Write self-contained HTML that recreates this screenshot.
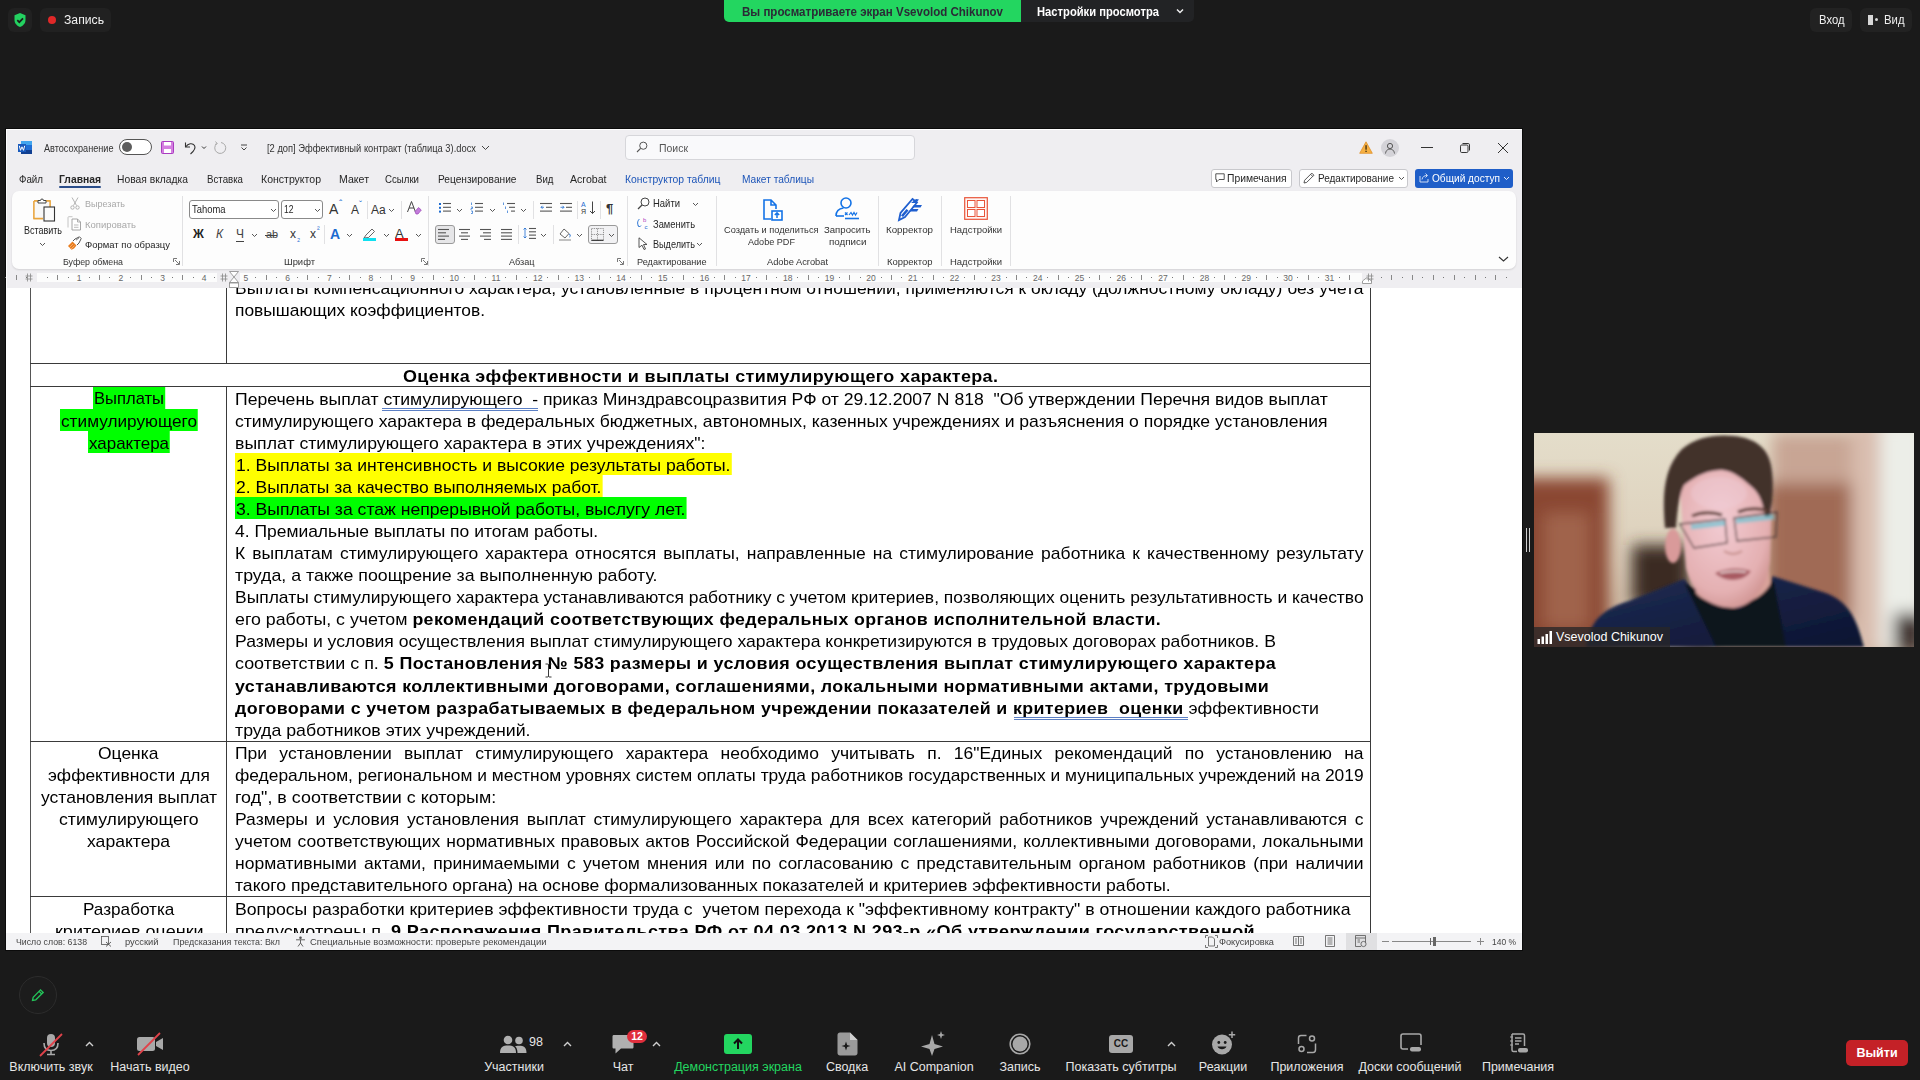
<!DOCTYPE html><html><head><meta charset="utf-8"><style>
*{box-sizing:border-box;margin:0;padding:0}
html,body{width:1920px;height:1080px;overflow:hidden;background:#1a1a1a;font-family:"Liberation Sans",sans-serif}
.a{position:absolute}
.t{position:absolute;white-space:nowrap;line-height:1}
.ln{position:absolute;white-space:nowrap;font-size:17px;line-height:22px;height:22px;color:#000;transform-origin:0 0}
.ln b{font-weight:bold;letter-spacing:0.35px}
.fit{transform-origin:0 0}
svg{position:absolute;overflow:visible}
</style></head><body><div class="a" style="left:8px;top:8px;width:24px;height:24px;background:#212121;border-radius:6px"></div><svg style="left:13px;top:12px" width="14" height="16" viewBox="0 0 14 16"><path d="M7 1 L12.5 3.2 V8 C12.5 11.5 10 13.8 7 15 C4 13.8 1.5 11.5 1.5 8 V3.2 Z" fill="#23d160"/><path d="M4.3 8.2 L6.3 10.2 L10 6.3" stroke="#1b1b1b" stroke-width="1.7" fill="none"/></svg><div class="a" style="left:40px;top:8px;width:71px;height:24px;background:#212121;border-radius:6px"></div><div class="a" style="left:48px;top:16px;width:8px;height:8px;background:#e02828;border-radius:50%"></div><div class="t fit" id="F1" style="transform:scaleX(0.9752);left:64px;top:14px;font-size:12.5px;color:#f2f2f2;">Запись</div><div class="a" style="left:724px;top:0px;width:297px;height:22px;background:#23d660;border-bottom-left-radius:5px"></div><div class="t fit" id="F2" style="transform:scaleX(0.8873);left:742px;top:5px;font-size:13px;color:#2b2a36;font-weight:bold">Вы просматриваете экран Vsevolod Chikunov</div><div class="a" style="left:1021px;top:0px;width:173px;height:22px;background:#222325;border-bottom-right-radius:5px"></div><div class="t fit" id="F3" style="transform:scaleX(0.8616);left:1037px;top:5px;font-size:13px;color:#fff;font-weight:bold">Настройки просмотра</div><svg style="left:1176px;top:8px" width="8" height="6" viewBox="0 0 8 6"><path d="M1 1.5 L4 4.5 L7 1.5" stroke="#eee" stroke-width="1.5" fill="none"/></svg><div class="a" style="left:1810px;top:8px;width:42px;height:24px;background:#222222;border-radius:6px"></div><div class="t fit" id="F4" style="transform:scaleX(0.9017);left:1819px;top:14px;font-size:12.5px;color:#f0f0f0;">Вход</div><div class="a" style="left:1860px;top:8px;width:52px;height:24px;background:#222222;border-radius:6px"></div><div class="a" style="left:1868px;top:15px;width:5px;height:10px;background:#d8d8d8"></div><div class="a" style="left:1875px;top:18px;width:3px;height:3px;background:#d8d8d8;border-radius:50%"></div><div class="t fit" id="F5" style="transform:scaleX(0.9061);left:1884px;top:14px;font-size:12.5px;color:#f0f0f0;">Вид</div><div class="a" style="left:5px;top:128px;width:1518px;height:823px;background:#0b0b0b"></div><div class="a" style="left:6px;top:129px;width:1516px;height:821px;background:#efeef1;border-top:1px solid #fff;border-left:1px solid #fff"></div><svg style="left:18px;top:141px" width="14" height="13" viewBox="0 0 14 13"><rect x="3" y="0" width="11" height="13" fill="#1f6fd6"/><rect x="3" y="0" width="11" height="4" fill="#41a5ee"/><rect x="3" y="9" width="11" height="4" fill="#103f91"/><rect x="0" y="3" width="8" height="8" fill="#185abd"/><path d="M1.3 4.8 L2.5 9.3 L4 5.8 L5.5 9.3 L6.7 4.8" stroke="#fff" stroke-width="1" fill="none"/></svg><div class="t fit" id="F6" style="transform:scaleX(0.8682);left:44px;top:143px;font-size:10.5px;color:#333;">Автосохранение</div><div class="a" style="left:119px;top:139px;width:33px;height:16px;border:1.3px solid #555;border-radius:8px;background:#fff"></div><div class="a" style="left:122px;top:142px;width:10px;height:10px;background:#5d5d5d;border-radius:50%"></div><svg style="left:161px;top:141px" width="13" height="13" viewBox="0 0 13 13"><rect x="0.5" y="0.5" width="12" height="12" rx="1" fill="#d47ee0" stroke="#a93cc0" stroke-width="1"/><rect x="3" y="1" width="7" height="3.5" fill="#fff"/><rect x="3" y="8" width="7" height="4" fill="#fff"/></svg><svg style="left:184px;top:141px" width="24" height="14" viewBox="0 0 24 14"><path d="M1.5 1.5 V6 H6" stroke="#333" stroke-width="1.1" fill="none"/><path d="M1.8 5.8 C4 2.5 8.5 1.5 10.5 4.5 C12 7 10 10 6.5 13" stroke="#333" stroke-width="1.1" fill="none"/><path d="M18 5.5 L20 7.5 L22 5.5" stroke="#333" stroke-width="1" fill="none"/></svg><svg style="left:214px;top:141px" width="14" height="14" viewBox="0 0 14 14"><path d="M3 2.5 A5.5 5.5 0 1 0 7 1.5" stroke="#aaa" stroke-width="1" fill="none"/><path d="M1.5 0.5 L3.2 2.6 L1 3.5" stroke="#aaa" stroke-width="1" fill="none"/></svg><svg style="left:240px;top:144px" width="8" height="8" viewBox="0 0 8 8"><path d="M1 1 H7" stroke="#444" stroke-width="1"/><path d="M1.5 3.5 L4 6 L6.5 3.5" stroke="#444" stroke-width="1" fill="none"/></svg><div class="t fit" id="F7" style="transform:scaleX(0.8895);left:267px;top:143px;font-size:10.5px;color:#333;">[2 доп] Эффективный контракт (таблица 3).docx</div><svg style="left:481px;top:145px" width="9" height="6" viewBox="0 0 9 6"><path d="M1 1 L4.5 4.5 L8 1" stroke="#444" stroke-width="1" fill="none"/></svg><div class="a" style="left:625px;top:135px;width:290px;height:25px;background:#f9f9fb;border:1px solid #d6d6da;border-radius:4px"></div><svg style="left:636px;top:141px" width="12" height="12" viewBox="0 0 12 12"><circle cx="7.3" cy="4.7" r="3.6" stroke="#555" stroke-width="1" fill="none"/><path d="M4.6 7.4 L1 11" stroke="#555" stroke-width="1.1"/></svg><div class="t fit" id="F8" style="transform:scaleX(0.9513);left:659px;top:143px;font-size:11px;color:#555;">Поиск</div><svg style="left:1359px;top:141px" width="14" height="13" viewBox="0 0 14 13"><path d="M7 0.8 L13.3 12.3 H0.7 Z" fill="#f6b042" stroke="#e0902a" stroke-width="0.8"/><rect x="6.4" y="4.2" width="1.3" height="4.5" fill="#3a2a10"/><rect x="6.4" y="9.7" width="1.3" height="1.3" fill="#3a2a10"/></svg><div class="a" style="left:1381px;top:139px;width:18px;height:18px;background:#d4d3d8;border-radius:50%"></div><svg style="left:1384px;top:142px" width="12" height="12" viewBox="0 0 12 12"><circle cx="6" cy="4" r="2.6" stroke="#555" stroke-width="1" fill="none"/><path d="M1.5 11.5 C2 8 4 7.2 6 7.2 C8 7.2 10 8 10.5 11.5" stroke="#555" stroke-width="1" fill="none"/></svg><div class="a" style="left:1421px;top:147px;width:12px;height:1px;background:#333"></div><svg style="left:1459px;top:142px" width="12" height="12" viewBox="0 0 12 12"><rect x="1.5" y="3" width="7.5" height="7.5" rx="1.2" stroke="#333" stroke-width="1" fill="none"/><path d="M3.5 1.5 H9.2 C10 1.5 10.5 2 10.5 2.8 V8.5" stroke="#333" stroke-width="1" fill="none"/></svg><svg style="left:1497px;top:142px" width="12" height="12" viewBox="0 0 12 12"><path d="M1 1 L11 11 M11 1 L1 11" stroke="#333" stroke-width="1"/></svg><div class="t fit" id="F9" style="transform:scaleX(0.8873);left:18.5px;top:174px;font-size:11px;color:#262626;">Файл</div><div class="t fit" id="F10" style="transform:scaleX(0.9385);left:59px;top:174px;font-size:11px;color:#262626;font-weight:bold;">Главная</div><div class="t fit" id="F11" style="transform:scaleX(0.9363);left:117px;top:174px;font-size:11px;color:#262626;">Новая вкладка</div><div class="t fit" id="F12" style="transform:scaleX(0.8804);left:207px;top:174px;font-size:11px;color:#262626;">Вставка</div><div class="t fit" id="F13" style="transform:scaleX(0.9567);left:261px;top:174px;font-size:11px;color:#262626;">Конструктор</div><div class="t fit" id="F14" style="transform:scaleX(0.9634);left:338.5px;top:174px;font-size:11px;color:#262626;">Макет</div><div class="t fit" id="F15" style="transform:scaleX(0.8778);left:385px;top:174px;font-size:11px;color:#262626;">Ссылки</div><div class="t fit" id="F16" style="transform:scaleX(0.9240);left:438px;top:174px;font-size:11px;color:#262626;">Рецензирование</div><div class="t fit" id="F17" style="transform:scaleX(0.8791);left:535.5px;top:174px;font-size:11px;color:#262626;">Вид</div><div class="t fit" id="F18" style="transform:scaleX(0.9625);left:570px;top:174px;font-size:11px;color:#262626;">Acrobat</div><div class="t fit" id="F19" style="transform:scaleX(0.9410);left:625px;top:174px;font-size:11px;color:#1d55b8;">Конструктор таблиц</div><div class="t fit" id="F20" style="transform:scaleX(0.9255);left:742px;top:174px;font-size:11px;color:#1d55b8;">Макет таблицы</div><div class="a" style="left:59px;top:186.3px;width:42px;height:2px;background:#2a4d8a;border-radius:1px"></div><div class="a" style="left:1211px;top:169px;width:81px;height:19px;background:#fff;border:1px solid #c8c8cc;border-radius:3px"></div><svg style="left:1215px;top:173px" width="10" height="10" viewBox="0 0 10 10"><path d="M0.8 0.8 H9.2 V6.5 H4 L1.5 9 V6.5 H0.8 Z" stroke="#444" stroke-width="0.9" fill="none"/></svg><div class="t fit" id="F21" style="transform:scaleX(0.9814);left:1227px;top:173px;font-size:10.5px;color:#262626;">Примечания</div><div class="a" style="left:1299px;top:169px;width:109px;height:19px;background:#fff;border:1px solid #c8c8cc;border-radius:3px"></div><svg style="left:1303px;top:172px" width="12" height="12" viewBox="0 0 12 12"><path d="M1 11 L1.6 8.3 L8.8 1.1 L10.9 3.2 L3.7 10.4 Z M7.6 2.3 L9.7 4.4" stroke="#444" stroke-width="0.9" fill="none"/></svg><div class="t fit" id="F22" style="transform:scaleX(0.9500);left:1318px;top:173px;font-size:10.5px;color:#262626;">Редактирование</div><svg style="left:1398px;top:176px" width="7" height="5" viewBox="0 0 7 5"><path d="M1 1 L3.5 3.5 L6 1" stroke="#444" stroke-width="0.9" fill="none"/></svg><div class="a" style="left:1415px;top:169px;width:98px;height:19px;background:#1f5ec8;border-radius:3px"></div><svg style="left:1419px;top:172px" width="11" height="11" viewBox="0 0 11 11"><path d="M1 4 V10 H9 V7" stroke="#dfe8f8" stroke-width="0.9" fill="none"/><path d="M3 7.5 C3.5 4.5 5.5 3.5 8 3.5 M6.5 1.5 L8.5 3.5 L6.5 5.5" stroke="#dfe8f8" stroke-width="0.9" fill="none"/></svg><div class="t fit" id="F23" style="transform:scaleX(0.9639);left:1432px;top:173px;font-size:10.5px;color:#fff;">Общий доступ</div><svg style="left:1503px;top:176px" width="7" height="5" viewBox="0 0 7 5"><path d="M1 1 L3.5 3.5 L6 1" stroke="#fff" stroke-width="0.9" fill="none"/></svg><div class="a" style="left:12px;top:191px;width:1504px;height:78px;background:#fdfdfd;border-radius:7px;box-shadow:0 1px 2px rgba(0,0,0,0.12)"></div><svg style="left:33px;top:197px" width="23" height="25" viewBox="0 0 23 25"><path d="M1 4 H5 M13 4 H17 V10" stroke="#e8a33a" stroke-width="1.3" fill="none"/><path d="M1 4 V21.5 H10" stroke="#e8a33a" stroke-width="1.3" fill="#f7f7f7"/><rect x="1" y="4" width="16" height="17.5" fill="#f8f8f8" stroke="none"/><path d="M1 4 V21.5 H10 M1 4 H5 M13 4 H17 V10" stroke="#e8a33a" stroke-width="1.3" fill="none"/><path d="M5 6 V3.5 H7.5 A1.5 1.5 0 0 1 10.5 3.5 H13 V6 Z" stroke="#444" stroke-width="1" fill="#fff"/><rect x="11" y="10" width="10.5" height="14" stroke="#333" stroke-width="1.1" fill="#fbfbfb"/></svg><div class="t fit" id="F24" style="transform:scaleX(0.8536);left:24px;top:225px;font-size:10.5px;color:#222;">Вставить</div><svg style="left:39px;top:242px" width="7" height="5" viewBox="0 0 7 5"><path d="M1 1 L3.5 3.5 L6 1" stroke="#444" stroke-width="0.9" fill="none"/></svg><svg style="left:70px;top:197px" width="10" height="13" viewBox="0 0 10 13"><path d="M2 0.5 L6.5 8.5 M8 0.5 L3.5 8.5" stroke="#aaa" stroke-width="0.9"/><circle cx="2.5" cy="10.5" r="1.7" stroke="#aaa" stroke-width="0.9" fill="none"/><circle cx="7.5" cy="10.5" r="1.7" stroke="#aaa" stroke-width="0.9" fill="none"/></svg><div class="t fit" id="F25" style="transform:scaleX(0.9464);left:85px;top:199px;font-size:9.5px;color:#a8a8a8;">Вырезать</div><svg style="left:67px;top:216px" width="15" height="15" viewBox="0 0 15 15"><path d="M1 11.5 V1.5 C1 1 1.3 0.7 1.8 0.7 H5.5" stroke="#c4c4c4" stroke-width="1" fill="none"/><path d="M5 3 H10.5 L13.5 6 V14 H5 Z" stroke="#9c9c9c" stroke-width="0.9" fill="#fff"/><path d="M10.5 3 V6 H13.5" stroke="#9c9c9c" stroke-width="0.8" fill="none"/><path d="M7 9 H11.5 M7 11.3 H11.5" stroke="#aaa" stroke-width="0.8"/></svg><div class="t fit" id="F26" style="transform:scaleX(0.9969);left:85px;top:219.5px;font-size:9.5px;color:#a8a8a8;">Копировать</div><svg style="left:67px;top:236px" width="15" height="15" viewBox="0 0 15 15"><path d="M1 10 L5.5 5.5 L9.5 9.5 L7 12.5 L4.5 13.8 Z" fill="#ea7d1d"/><path d="M2.5 11.5 L6 8 M4 13 L7.5 9.5" stroke="#fff" stroke-width="0.5" opacity="0.7"/><path d="M6 5 L8 3 L12.5 0.8 L14.2 2.5 L12 7 L10 9" stroke="#555" stroke-width="1" fill="#fff"/><path d="M9 4.2 L12 1.8" stroke="#555" stroke-width="0.8"/></svg><div class="t fit" id="F27" style="transform:scaleX(0.9978);left:85px;top:240px;font-size:9.5px;color:#262626;">Формат по образцу</div><div class="t fit" id="F28" style="transform:scaleX(0.9293);left:63px;top:256.5px;font-size:9.5px;color:#333;">Буфер обмена</div><svg style="left:173px;top:258px" width="7" height="7" viewBox="0 0 7 7"><path d="M0.5 4 V0.5 H4 M6.5 3 V6.5 H3 M2 2 L6 6" stroke="#555" stroke-width="0.8" fill="none"/></svg><div class="a" style="left:182px;top:196px;width:1px;height:70px;background:#e1e1e3"></div><div class="a" style="left:189px;top:200px;width:90px;height:19px;background:#fff;border:1px solid #8a8a8a;border-radius:3px"></div><div class="t fit" id="F29" style="transform:scaleX(0.8967);left:192px;top:204px;font-size:10.5px;color:#262626;">Tahoma</div><svg style="left:270px;top:208px" width="7" height="5" viewBox="0 0 7 5"><path d="M1 1 L3.5 3.5 L6 1" stroke="#444" stroke-width="0.9" fill="none"/></svg><div class="a" style="left:281px;top:200px;width:42px;height:19px;background:#fff;border:1px solid #8a8a8a;border-radius:3px"></div><div class="t fit" id="F30" style="transform:scaleX(0.8128);left:284px;top:204px;font-size:10.5px;color:#262626;">12</div><svg style="left:314px;top:208px" width="7" height="5" viewBox="0 0 7 5"><path d="M1 1 L3.5 3.5 L6 1" stroke="#444" stroke-width="0.9" fill="none"/></svg><div class="t" style="left:329px;top:202px;font-size:14px;color:#333;">A</div><div class="t" style="left:339px;top:200px;font-size:10px;color:#1d6bd0;">ˆ</div><div class="t" style="left:351px;top:204px;font-size:12px;color:#333;">A</div><div class="t" style="left:359px;top:200px;font-size:9px;color:#1d6bd0;">ˇ</div><div class="a" style="left:367px;top:201px;width:1px;height:18px;background:#e1e1e3"></div><div class="t" style="left:371px;top:204px;font-size:12px;color:#333;">Aa</div><svg style="left:388px;top:208px" width="7" height="5" viewBox="0 0 7 5"><path d="M1 1 L3.5 3.5 L6 1" stroke="#444" stroke-width="0.9" fill="none"/></svg><div class="a" style="left:401px;top:201px;width:1px;height:18px;background:#e1e1e3"></div><svg style="left:407px;top:201px" width="15" height="15" viewBox="0 0 15 15"><path d="M0.5 11 L4.5 0.5 L8.5 11 M2 7 H7" stroke="#444" stroke-width="1" fill="none"/><path d="M8 10.5 L11.5 6.5 L14.3 9 L11 13 H9 Z" fill="#c37ddb" stroke="#9b44b8" stroke-width="0.7"/></svg><div class="t" style="left:193px;top:228px;font-size:12px;color:#222;font-weight:bold">Ж</div><div class="t" style="left:216px;top:228px;font-size:12px;color:#444;font-style:italic">К</div><div class="t" style="left:236px;top:228px;font-size:12px;color:#444;">Ч</div><div class="a" style="left:236px;top:241px;width:8px;height:1px;background:#444"></div><svg style="left:251px;top:233px" width="7" height="5" viewBox="0 0 7 5"><path d="M1 1 L3.5 3.5 L6 1" stroke="#444" stroke-width="0.9" fill="none"/></svg><div class="t" style="left:266px;top:229px;font-size:11px;color:#444;">ab</div><div class="a" style="left:265px;top:235px;width:12px;height:1px;background:#444"></div><div class="t" style="left:290px;top:228px;font-size:12px;color:#333;">x</div><div class="t" style="left:297px;top:235px;font-size:8px;color:#1d6bd0;">₂</div><div class="t" style="left:310px;top:228px;font-size:12px;color:#333;">x</div><div class="t" style="left:317px;top:226px;font-size:8px;color:#1d6bd0;">²</div><div class="a" style="left:324px;top:225px;width:1px;height:19px;background:#e1e1e3"></div><div class="t" style="left:330px;top:227px;font-size:14px;color:#1d6bd0;font-weight:bold">A</div><svg style="left:346px;top:233px" width="7" height="5" viewBox="0 0 7 5"><path d="M1 1 L3.5 3.5 L6 1" stroke="#444" stroke-width="0.9" fill="none"/></svg><svg style="left:363px;top:228px" width="13" height="14" viewBox="0 0 13 14"><path d="M1 10 L3 7 L9 1 L11.5 3.5 L5.5 9.5 Z" stroke="#555" stroke-width="0.9" fill="none"/></svg><div class="a" style="left:363px;top:238px;width:13px;height:3px;background:#10e0f0"></div><svg style="left:383px;top:233px" width="7" height="5" viewBox="0 0 7 5"><path d="M1 1 L3.5 3.5 L6 1" stroke="#444" stroke-width="0.9" fill="none"/></svg><div class="t" style="left:395px;top:227px;font-size:13px;color:#333;">A</div><div class="a" style="left:395px;top:238px;width:13px;height:3px;background:#e81010"></div><svg style="left:415px;top:233px" width="7" height="5" viewBox="0 0 7 5"><path d="M1 1 L3.5 3.5 L6 1" stroke="#444" stroke-width="0.9" fill="none"/></svg><div class="t fit" id="F31" style="transform:scaleX(0.9915);left:284px;top:256.5px;font-size:9.5px;color:#333;">Шрифт</div><svg style="left:421px;top:258px" width="7" height="7" viewBox="0 0 7 7"><path d="M0.5 4 V0.5 H4 M6.5 3 V6.5 H3 M2 2 L6 6" stroke="#555" stroke-width="0.8" fill="none"/></svg><div class="a" style="left:428px;top:196px;width:1px;height:70px;background:#e1e1e3"></div><svg style="left:438px;top:202px" width="16" height="14" viewBox="0 0 16 14"><path d="M5 1.5 H13" stroke="#555" stroke-width="1.1"/><path d="M5 5.3 H13" stroke="#555" stroke-width="1.1"/><path d="M5 9.1 H13" stroke="#555" stroke-width="1.1"/><rect x="1" y="1" width="2" height="2" fill="#1d6bd0"/><rect x="1" y="4.8" width="2" height="2" fill="#1d6bd0"/><rect x="1" y="8.6" width="2" height="2" fill="#1d6bd0"/></svg><svg style="left:456px;top:208px" width="7" height="5" viewBox="0 0 7 5"><path d="M1 1 L3.5 3.5 L6 1" stroke="#444" stroke-width="0.9" fill="none"/></svg><svg style="left:470px;top:202px" width="16" height="14" viewBox="0 0 16 14"><path d="M5 1.5 H13" stroke="#555" stroke-width="1.1"/><path d="M5 5.3 H13" stroke="#555" stroke-width="1.1"/><path d="M5 9.1 H13" stroke="#555" stroke-width="1.1"/><path d="M1.5 0.5 V3 M1 5 H2.5 V6.5 H1 V8 M1 9 H2.5 V11.5 H1" stroke="#1d6bd0" stroke-width="0.7" fill="none"/></svg><svg style="left:489px;top:208px" width="7" height="5" viewBox="0 0 7 5"><path d="M1 1 L3.5 3.5 L6 1" stroke="#444" stroke-width="0.9" fill="none"/></svg><svg style="left:502px;top:202px" width="16" height="14" viewBox="0 0 16 14"><path d="M5 1.5 H13" stroke="#555" stroke-width="1.1"/><path d="M7 5.3 H13" stroke="#555" stroke-width="1.1"/><path d="M9 9.1 H13" stroke="#555" stroke-width="1.1"/><path d="M1.5 0.5 V3 M3.5 4.5 V7 M5.5 8.5 V11" stroke="#1d6bd0" stroke-width="0.7"/></svg><svg style="left:520px;top:208px" width="7" height="5" viewBox="0 0 7 5"><path d="M1 1 L3.5 3.5 L6 1" stroke="#444" stroke-width="0.9" fill="none"/></svg><div class="a" style="left:533px;top:201px;width:1px;height:18px;background:#e1e1e3"></div><svg style="left:540px;top:202px" width="16" height="14" viewBox="0 0 16 14"><path d="M0 1.5 H12" stroke="#555" stroke-width="1.1"/><path d="M6 5.3 H12" stroke="#555" stroke-width="1.1"/><path d="M0 9.1 H12" stroke="#555" stroke-width="1.1"/><path d="M4 5.3 H1 M2.5 3.8 L1 5.3 L2.5 6.8" stroke="#1d6bd0" stroke-width="0.8" fill="none"/></svg><svg style="left:560px;top:202px" width="16" height="14" viewBox="0 0 16 14"><path d="M0 1.5 H12" stroke="#555" stroke-width="1.1"/><path d="M6 5.3 H12" stroke="#555" stroke-width="1.1"/><path d="M0 9.1 H12" stroke="#555" stroke-width="1.1"/><path d="M0.5 5.3 H4 M2.5 3.8 L4 5.3 L2.5 6.8" stroke="#1d6bd0" stroke-width="0.8" fill="none"/></svg><div class="a" style="left:577px;top:201px;width:1px;height:18px;background:#e1e1e3"></div><div class="t" style="left:581px;top:201px;font-size:7px;color:#1d6bd0;">А</div><div class="t" style="left:581px;top:208px;font-size:7px;color:#333;">Я</div><svg style="left:589px;top:201px" width="7" height="14" viewBox="0 0 7 14"><path d="M3.5 0.5 V12.5 M1 10 L3.5 12.5 L6 10" stroke="#444" stroke-width="1" fill="none"/></svg><div class="a" style="left:600px;top:201px;width:1px;height:18px;background:#e1e1e3"></div><div class="t" style="left:606px;top:202px;font-size:13px;color:#333;font-weight:bold">¶</div><div class="a" style="left:435px;top:225px;width:20px;height:19px;background:#e6e6e8;border:1px solid #9a9a9a;border-radius:3px"></div><svg style="left:438px;top:228px" width="16" height="14" viewBox="0 0 16 14"><path d="M0 1.5 H11" stroke="#555" stroke-width="1.1"/><path d="M0 4.8 H8" stroke="#555" stroke-width="1.1"/><path d="M0 8.1 H11" stroke="#555" stroke-width="1.1"/><path d="M0 11.4 H7" stroke="#555" stroke-width="1.1"/></svg><svg style="left:459px;top:228px" width="16" height="14" viewBox="0 0 16 14"><path d="M0 1.5 H11" stroke="#555" stroke-width="1.1"/><path d="M2 4.8 H9" stroke="#555" stroke-width="1.1"/><path d="M0 8.1 H11" stroke="#555" stroke-width="1.1"/><path d="M2 11.4 H9" stroke="#555" stroke-width="1.1"/></svg><svg style="left:480px;top:228px" width="16" height="14" viewBox="0 0 16 14"><path d="M0 1.5 H11" stroke="#555" stroke-width="1.1"/><path d="M3 4.8 H11" stroke="#555" stroke-width="1.1"/><path d="M0 8.1 H11" stroke="#555" stroke-width="1.1"/><path d="M4 11.4 H11" stroke="#555" stroke-width="1.1"/></svg><svg style="left:501px;top:228px" width="16" height="14" viewBox="0 0 16 14"><path d="M0 1.5 H11" stroke="#555" stroke-width="1.1"/><path d="M0 4.8 H11" stroke="#555" stroke-width="1.1"/><path d="M0 8.1 H11" stroke="#555" stroke-width="1.1"/><path d="M0 11.4 H11" stroke="#555" stroke-width="1.1"/></svg><div class="a" style="left:518px;top:225px;width:1px;height:19px;background:#e1e1e3"></div><svg style="left:523px;top:227px" width="16" height="14" viewBox="0 0 16 14"><path d="M6 1.5 H13" stroke="#555" stroke-width="1.1"/><path d="M6 4.8 H13" stroke="#555" stroke-width="1.1"/><path d="M6 8.1 H13" stroke="#555" stroke-width="1.1"/><path d="M6 11.4 H13" stroke="#555" stroke-width="1.1"/><path d="M2 1 V11 M0.5 2.5 L2 1 L3.5 2.5 M0.5 9.5 L2 11 L3.5 9.5" stroke="#1d6bd0" stroke-width="0.8" fill="none"/></svg><svg style="left:540px;top:233px" width="7" height="5" viewBox="0 0 7 5"><path d="M1 1 L3.5 3.5 L6 1" stroke="#444" stroke-width="0.9" fill="none"/></svg><div class="a" style="left:553px;top:225px;width:1px;height:19px;background:#e1e1e3"></div><svg style="left:558px;top:227px" width="14" height="15" viewBox="0 0 14 15"><path d="M2 7 L6 2 L11 6.5 L7 11 Z" stroke="#555" stroke-width="0.9" fill="none"/><path d="M11.5 7 C12.5 8.5 12.5 9.5 11.5 10" stroke="#1d6bd0" stroke-width="1" fill="none"/><path d="M1 13 H13" stroke="#999" stroke-width="1.2"/></svg><svg style="left:576px;top:233px" width="7" height="5" viewBox="0 0 7 5"><path d="M1 1 L3.5 3.5 L6 1" stroke="#444" stroke-width="0.9" fill="none"/></svg><div class="a" style="left:588px;top:225px;width:30px;height:19px;background:#f2f2f4;border:1px solid #9a9a9a;border-radius:3px"></div><svg style="left:591px;top:228px" width="13" height="13" viewBox="0 0 13 13"><path d="M0.5 0.5 H12.5 V12.5 H0.5 Z M6.5 0.5 V12.5 M0.5 6.5 H12.5" stroke="#777" stroke-width="0.8" stroke-dasharray="1.2 1" fill="none"/><path d="M0.5 12.3 H12.5" stroke="#333" stroke-width="1.2"/></svg><svg style="left:608px;top:233px" width="7" height="5" viewBox="0 0 7 5"><path d="M1 1 L3.5 3.5 L6 1" stroke="#444" stroke-width="0.9" fill="none"/></svg><div class="t fit" id="F32" style="transform:scaleX(0.9566);left:509px;top:256.5px;font-size:9.5px;color:#333;">Абзац</div><svg style="left:617px;top:258px" width="7" height="7" viewBox="0 0 7 7"><path d="M0.5 4 V0.5 H4 M6.5 3 V6.5 H3 M2 2 L6 6" stroke="#555" stroke-width="0.8" fill="none"/></svg><div class="a" style="left:627px;top:196px;width:1px;height:70px;background:#e1e1e3"></div><svg style="left:637px;top:197px" width="13" height="13" viewBox="0 0 13 13"><circle cx="8" cy="5" r="4" stroke="#444" stroke-width="1" fill="none"/><path d="M5 8 L1 12" stroke="#444" stroke-width="1.2"/></svg><div class="t fit" id="F33" style="transform:scaleX(0.9009);left:653px;top:198px;font-size:10.5px;color:#262626;">Найти</div><svg style="left:692px;top:202px" width="7" height="5" viewBox="0 0 7 5"><path d="M1 1 L3.5 3.5 L6 1" stroke="#444" stroke-width="0.9" fill="none"/></svg><svg style="left:636px;top:216px" width="13" height="14" viewBox="0 0 13 14"><path d="M3.5 3 C1 5 1 9 3.5 11 M2 9.5 L3.5 11 L5 9.5" stroke="#1d6bd0" stroke-width="0.9" fill="none"/><text x="7" y="6" font-size="6" fill="#b040c0" font-family="Liberation Sans">b</text><text x="8.5" y="13" font-size="6" fill="#1d6bd0" font-family="Liberation Sans">c</text></svg><div class="t fit" id="F34" style="transform:scaleX(0.8901);left:653px;top:219px;font-size:10.5px;color:#262626;">Заменить</div><svg style="left:638px;top:237px" width="10" height="13" viewBox="0 0 10 13"><path d="M1 0.8 L9 7.5 H5.5 L7.5 12 L6 12.5 L4 8.2 L1 10.5 Z" stroke="#444" stroke-width="0.9" fill="#fff"/></svg><div class="t fit" id="F35" style="transform:scaleX(0.8668);left:653px;top:239px;font-size:10.5px;color:#262626;">Выделить</div><svg style="left:696px;top:242px" width="7" height="5" viewBox="0 0 7 5"><path d="M1 1 L3.5 3.5 L6 1" stroke="#444" stroke-width="0.9" fill="none"/></svg><div class="t fit" id="F36" style="transform:scaleX(0.9603);left:637px;top:256.5px;font-size:9.5px;color:#333;">Редактирование</div><div class="a" style="left:716px;top:196px;width:1px;height:70px;background:#e1e1e3"></div><svg style="left:763px;top:199px" width="20" height="22" viewBox="0 0 20 22"><path d="M8 20 H1 V1 H8 L13 6 V10 M8 1 V6 H13" stroke="#1473e6" stroke-width="1.6" fill="none"/><rect x="9" y="12" width="10" height="9" stroke="#1473e6" stroke-width="1.6" fill="#fff"/><path d="M14 19 V14 M11.8 16 L14 13.8 L16.2 16" stroke="#1473e6" stroke-width="1.5" fill="none"/></svg><div class="t fit" id="F37" style="transform:scaleX(0.9695);left:724px;top:224.5px;font-size:9.5px;color:#333;">Создать и поделиться</div><div class="t fit" id="F38" style="transform:scaleX(0.9567);left:748px;top:237px;font-size:9.5px;color:#333;">Adobe PDF</div><svg style="left:834px;top:197px" width="27" height="24" viewBox="0 0 27 24"><circle cx="12" cy="6" r="5" stroke="#1473e6" stroke-width="1.6" fill="none"/><path d="M2 19 C2 13 6 11.5 9.5 11" stroke="#1473e6" stroke-width="1.6" fill="none"/><path d="M2 19 H10" stroke="#1473e6" stroke-width="1.6"/><path d="M11 15.5 L13.5 18 M13.5 15.5 L11 18 M15 18 L17 15.5 L18.5 18 L20 15.5 L21.5 18 L23 15.5" stroke="#1473e6" stroke-width="1.2" fill="none"/><path d="M11 21.5 H25" stroke="#1473e6" stroke-width="1.6"/></svg><div class="t fit" id="F39" style="transform:scaleX(1.0088);left:824px;top:224.5px;font-size:9.5px;color:#333;">Запросить</div><div class="t fit" id="F40" style="transform:scaleX(1.0336);left:829px;top:237px;font-size:9.5px;color:#333;">подписи</div><div class="t fit" id="F41" style="transform:scaleX(0.9787);left:767px;top:256.5px;font-size:9.5px;color:#333;">Adobe Acrobat</div><div class="a" style="left:878px;top:196px;width:1px;height:70px;background:#e1e1e3"></div><svg style="left:897px;top:196px" width="26" height="26" viewBox="0 0 26 26"><path d="M2 24 L3.5 17 L15.5 3 L20 6.5 L8 21 Z" stroke="#1f5fcf" stroke-width="1.8" fill="#fff"/><path d="M14 7 L19 3 L22 3.5 L19 7 Z M17 9 H25 L23.5 11.5 H15 Z M14.5 13 H21.5 L20 15.5 H12.5 Z" fill="#1f5fcf"/><path d="M4 19.5 L9.5 13 L11.5 14.5 L6 21" fill="#1f5fcf"/></svg><div class="t fit" id="F42" style="transform:scaleX(1.0273);left:886px;top:224.5px;font-size:9.5px;color:#333;">Корректор</div><div class="t fit" id="F43" style="transform:scaleX(0.9945);left:887px;top:256.5px;font-size:9.5px;color:#333;">Корректор</div><div class="a" style="left:941px;top:196px;width:1px;height:70px;background:#e1e1e3"></div><svg style="left:964px;top:197px" width="24" height="23" viewBox="0 0 24 23"><rect x="0.7" y="0.7" width="22.6" height="21.6" stroke="#e8553a" stroke-width="1.2" fill="#fff6f4"/><rect x="3.5" y="3.5" width="7.5" height="7" stroke="#e8553a" stroke-width="1" fill="#fff"/><rect x="13" y="3.5" width="7.5" height="7" stroke="#e8553a" stroke-width="1" fill="#fff"/><rect x="3.5" y="12.5" width="7.5" height="7" stroke="#e8553a" stroke-width="1" fill="#fff"/><rect x="13" y="12.5" width="7.5" height="7" stroke="#e8553a" stroke-width="1" fill="#fff"/></svg><div class="t fit" id="F44" style="transform:scaleX(0.9976);left:950px;top:224.5px;font-size:9.5px;color:#333;">Надстройки</div><div class="t fit" id="F45" style="transform:scaleX(0.9976);left:950px;top:256.5px;font-size:9.5px;color:#333;">Надстройки</div><div class="a" style="left:1010px;top:196px;width:1px;height:70px;background:#e1e1e3"></div><svg style="left:1498px;top:256px" width="11" height="6" viewBox="0 0 11 6"><path d="M1 1 L5.5 5 L10 1" stroke="#333" stroke-width="1.1" fill="none"/></svg><div class="a" style="left:37px;top:273px;width:180px;height:9px;background:#fcfcfc"></div><div class="a" style="left:240px;top:273px;width:1122px;height:9px;background:#fcfcfc"></div><div class="a" style="left:5.2px;top:277px;width:1px;height:1px;background:#777"></div><div class="a" style="left:15.7px;top:275px;width:1px;height:5px;background:#888"></div><div class="a" style="left:26.1px;top:277px;width:1px;height:1px;background:#777"></div><div class="a" style="left:46.9px;top:277px;width:1px;height:1px;background:#777"></div><div class="a" style="left:57.3px;top:275px;width:1px;height:5px;background:#888"></div><div class="a" style="left:67.8px;top:277px;width:1px;height:1px;background:#777"></div><div class="t" style="left:73.2px;top:274px;width:12px;text-align:center;font-size:8.5px;color:#666">1</div><div class="a" style="left:88.6px;top:277px;width:1px;height:1px;background:#777"></div><div class="a" style="left:99.0px;top:275px;width:1px;height:5px;background:#888"></div><div class="a" style="left:109.4px;top:277px;width:1px;height:1px;background:#777"></div><div class="t" style="left:114.9px;top:274px;width:12px;text-align:center;font-size:8.5px;color:#666">2</div><div class="a" style="left:130.3px;top:277px;width:1px;height:1px;background:#777"></div><div class="a" style="left:140.7px;top:275px;width:1px;height:5px;background:#888"></div><div class="a" style="left:151.1px;top:277px;width:1px;height:1px;background:#777"></div><div class="t" style="left:156.5px;top:274px;width:12px;text-align:center;font-size:8.5px;color:#666">3</div><div class="a" style="left:172.0px;top:277px;width:1px;height:1px;background:#777"></div><div class="a" style="left:182.4px;top:275px;width:1px;height:5px;background:#888"></div><div class="a" style="left:192.8px;top:277px;width:1px;height:1px;background:#777"></div><div class="t" style="left:198.2px;top:274px;width:12px;text-align:center;font-size:8.5px;color:#666">4</div><div class="a" style="left:213.6px;top:277px;width:1px;height:1px;background:#777"></div><div class="t" style="left:239.9px;top:274px;width:12px;text-align:center;font-size:8.5px;color:#666">5</div><div class="a" style="left:255.3px;top:277px;width:1px;height:1px;background:#777"></div><div class="a" style="left:265.7px;top:275px;width:1px;height:5px;background:#888"></div><div class="a" style="left:276.2px;top:277px;width:1px;height:1px;background:#777"></div><div class="t" style="left:281.6px;top:274px;width:12px;text-align:center;font-size:8.5px;color:#666">6</div><div class="a" style="left:297.0px;top:277px;width:1px;height:1px;background:#777"></div><div class="a" style="left:307.4px;top:275px;width:1px;height:5px;background:#888"></div><div class="a" style="left:317.8px;top:277px;width:1px;height:1px;background:#777"></div><div class="t" style="left:323.3px;top:274px;width:12px;text-align:center;font-size:8.5px;color:#666">7</div><div class="a" style="left:338.7px;top:277px;width:1px;height:1px;background:#777"></div><div class="a" style="left:349.1px;top:275px;width:1px;height:5px;background:#888"></div><div class="a" style="left:359.5px;top:277px;width:1px;height:1px;background:#777"></div><div class="t" style="left:364.9px;top:274px;width:12px;text-align:center;font-size:8.5px;color:#666">8</div><div class="a" style="left:380.4px;top:277px;width:1px;height:1px;background:#777"></div><div class="a" style="left:390.8px;top:275px;width:1px;height:5px;background:#888"></div><div class="a" style="left:401.2px;top:277px;width:1px;height:1px;background:#777"></div><div class="t" style="left:406.6px;top:274px;width:12px;text-align:center;font-size:8.5px;color:#666">9</div><div class="a" style="left:422.0px;top:277px;width:1px;height:1px;background:#777"></div><div class="a" style="left:432.5px;top:275px;width:1px;height:5px;background:#888"></div><div class="a" style="left:442.9px;top:277px;width:1px;height:1px;background:#777"></div><div class="t" style="left:448.3px;top:274px;width:12px;text-align:center;font-size:8.5px;color:#666">10</div><div class="a" style="left:463.7px;top:277px;width:1px;height:1px;background:#777"></div><div class="a" style="left:474.1px;top:275px;width:1px;height:5px;background:#888"></div><div class="a" style="left:484.6px;top:277px;width:1px;height:1px;background:#777"></div><div class="t" style="left:490.0px;top:274px;width:12px;text-align:center;font-size:8.5px;color:#666">11</div><div class="a" style="left:505.4px;top:277px;width:1px;height:1px;background:#777"></div><div class="a" style="left:515.8px;top:275px;width:1px;height:5px;background:#888"></div><div class="a" style="left:526.2px;top:277px;width:1px;height:1px;background:#777"></div><div class="t" style="left:531.7px;top:274px;width:12px;text-align:center;font-size:8.5px;color:#666">12</div><div class="a" style="left:547.1px;top:277px;width:1px;height:1px;background:#777"></div><div class="a" style="left:557.5px;top:275px;width:1px;height:5px;background:#888"></div><div class="a" style="left:567.9px;top:277px;width:1px;height:1px;background:#777"></div><div class="t" style="left:573.3px;top:274px;width:12px;text-align:center;font-size:8.5px;color:#666">13</div><div class="a" style="left:588.8px;top:277px;width:1px;height:1px;background:#777"></div><div class="a" style="left:599.2px;top:275px;width:1px;height:5px;background:#888"></div><div class="a" style="left:609.6px;top:277px;width:1px;height:1px;background:#777"></div><div class="t" style="left:615.0px;top:274px;width:12px;text-align:center;font-size:8.5px;color:#666">14</div><div class="a" style="left:630.4px;top:277px;width:1px;height:1px;background:#777"></div><div class="a" style="left:640.9px;top:275px;width:1px;height:5px;background:#888"></div><div class="a" style="left:651.3px;top:277px;width:1px;height:1px;background:#777"></div><div class="t" style="left:656.7px;top:274px;width:12px;text-align:center;font-size:8.5px;color:#666">15</div><div class="a" style="left:672.1px;top:277px;width:1px;height:1px;background:#777"></div><div class="a" style="left:682.5px;top:275px;width:1px;height:5px;background:#888"></div><div class="a" style="left:693.0px;top:277px;width:1px;height:1px;background:#777"></div><div class="t" style="left:698.4px;top:274px;width:12px;text-align:center;font-size:8.5px;color:#666">16</div><div class="a" style="left:713.8px;top:277px;width:1px;height:1px;background:#777"></div><div class="a" style="left:724.2px;top:275px;width:1px;height:5px;background:#888"></div><div class="a" style="left:734.6px;top:277px;width:1px;height:1px;background:#777"></div><div class="t" style="left:740.1px;top:274px;width:12px;text-align:center;font-size:8.5px;color:#666">17</div><div class="a" style="left:755.5px;top:277px;width:1px;height:1px;background:#777"></div><div class="a" style="left:765.9px;top:275px;width:1px;height:5px;background:#888"></div><div class="a" style="left:776.3px;top:277px;width:1px;height:1px;background:#777"></div><div class="t" style="left:781.7px;top:274px;width:12px;text-align:center;font-size:8.5px;color:#666">18</div><div class="a" style="left:797.2px;top:277px;width:1px;height:1px;background:#777"></div><div class="a" style="left:807.6px;top:275px;width:1px;height:5px;background:#888"></div><div class="a" style="left:818.0px;top:277px;width:1px;height:1px;background:#777"></div><div class="t" style="left:823.4px;top:274px;width:12px;text-align:center;font-size:8.5px;color:#666">19</div><div class="a" style="left:838.8px;top:277px;width:1px;height:1px;background:#777"></div><div class="a" style="left:849.3px;top:275px;width:1px;height:5px;background:#888"></div><div class="a" style="left:859.7px;top:277px;width:1px;height:1px;background:#777"></div><div class="t" style="left:865.1px;top:274px;width:12px;text-align:center;font-size:8.5px;color:#666">20</div><div class="a" style="left:880.5px;top:277px;width:1px;height:1px;background:#777"></div><div class="a" style="left:890.9px;top:275px;width:1px;height:5px;background:#888"></div><div class="a" style="left:901.4px;top:277px;width:1px;height:1px;background:#777"></div><div class="t" style="left:906.8px;top:274px;width:12px;text-align:center;font-size:8.5px;color:#666">21</div><div class="a" style="left:922.2px;top:277px;width:1px;height:1px;background:#777"></div><div class="a" style="left:932.6px;top:275px;width:1px;height:5px;background:#888"></div><div class="a" style="left:943.0px;top:277px;width:1px;height:1px;background:#777"></div><div class="t" style="left:948.5px;top:274px;width:12px;text-align:center;font-size:8.5px;color:#666">22</div><div class="a" style="left:963.9px;top:277px;width:1px;height:1px;background:#777"></div><div class="a" style="left:974.3px;top:275px;width:1px;height:5px;background:#888"></div><div class="a" style="left:984.7px;top:277px;width:1px;height:1px;background:#777"></div><div class="t" style="left:990.1px;top:274px;width:12px;text-align:center;font-size:8.5px;color:#666">23</div><div class="a" style="left:1005.6px;top:277px;width:1px;height:1px;background:#777"></div><div class="a" style="left:1016.0px;top:275px;width:1px;height:5px;background:#888"></div><div class="a" style="left:1026.4px;top:277px;width:1px;height:1px;background:#777"></div><div class="t" style="left:1031.8px;top:274px;width:12px;text-align:center;font-size:8.5px;color:#666">24</div><div class="a" style="left:1047.2px;top:277px;width:1px;height:1px;background:#777"></div><div class="a" style="left:1057.7px;top:275px;width:1px;height:5px;background:#888"></div><div class="a" style="left:1068.1px;top:277px;width:1px;height:1px;background:#777"></div><div class="t" style="left:1073.5px;top:274px;width:12px;text-align:center;font-size:8.5px;color:#666">25</div><div class="a" style="left:1088.9px;top:277px;width:1px;height:1px;background:#777"></div><div class="a" style="left:1099.3px;top:275px;width:1px;height:5px;background:#888"></div><div class="a" style="left:1109.8px;top:277px;width:1px;height:1px;background:#777"></div><div class="t" style="left:1115.2px;top:274px;width:12px;text-align:center;font-size:8.5px;color:#666">26</div><div class="a" style="left:1130.6px;top:277px;width:1px;height:1px;background:#777"></div><div class="a" style="left:1141.0px;top:275px;width:1px;height:5px;background:#888"></div><div class="a" style="left:1151.4px;top:277px;width:1px;height:1px;background:#777"></div><div class="t" style="left:1156.9px;top:274px;width:12px;text-align:center;font-size:8.5px;color:#666">27</div><div class="a" style="left:1172.3px;top:277px;width:1px;height:1px;background:#777"></div><div class="a" style="left:1182.7px;top:275px;width:1px;height:5px;background:#888"></div><div class="a" style="left:1193.1px;top:277px;width:1px;height:1px;background:#777"></div><div class="t" style="left:1198.5px;top:274px;width:12px;text-align:center;font-size:8.5px;color:#666">28</div><div class="a" style="left:1214.0px;top:277px;width:1px;height:1px;background:#777"></div><div class="a" style="left:1224.4px;top:275px;width:1px;height:5px;background:#888"></div><div class="a" style="left:1234.8px;top:277px;width:1px;height:1px;background:#777"></div><div class="t" style="left:1240.2px;top:274px;width:12px;text-align:center;font-size:8.5px;color:#666">29</div><div class="a" style="left:1255.6px;top:277px;width:1px;height:1px;background:#777"></div><div class="a" style="left:1266.1px;top:275px;width:1px;height:5px;background:#888"></div><div class="a" style="left:1276.5px;top:277px;width:1px;height:1px;background:#777"></div><div class="t" style="left:1281.9px;top:274px;width:12px;text-align:center;font-size:8.5px;color:#666">30</div><div class="a" style="left:1297.3px;top:277px;width:1px;height:1px;background:#777"></div><div class="a" style="left:1307.7px;top:275px;width:1px;height:5px;background:#888"></div><div class="a" style="left:1318.2px;top:277px;width:1px;height:1px;background:#777"></div><div class="t" style="left:1323.6px;top:274px;width:12px;text-align:center;font-size:8.5px;color:#666">31</div><div class="a" style="left:1339.0px;top:277px;width:1px;height:1px;background:#777"></div><div class="a" style="left:1349.4px;top:275px;width:1px;height:5px;background:#888"></div><div class="a" style="left:1380.7px;top:277px;width:1px;height:1px;background:#777"></div><div class="a" style="left:1391.1px;top:275px;width:1px;height:5px;background:#888"></div><div class="a" style="left:1401.5px;top:277px;width:1px;height:1px;background:#777"></div><div class="a" style="left:1411.9px;top:275px;width:1px;height:5px;background:#888"></div><div class="a" style="left:1422.4px;top:277px;width:1px;height:1px;background:#777"></div><div class="a" style="left:1432.8px;top:275px;width:1px;height:5px;background:#888"></div><div class="a" style="left:1443.2px;top:277px;width:1px;height:1px;background:#777"></div><div class="a" style="left:1453.6px;top:275px;width:1px;height:5px;background:#888"></div><div class="a" style="left:1464.0px;top:277px;width:1px;height:1px;background:#777"></div><div class="a" style="left:1474.5px;top:275px;width:1px;height:5px;background:#888"></div><div class="a" style="left:1484.9px;top:277px;width:1px;height:1px;background:#777"></div><div class="a" style="left:1495.3px;top:275px;width:1px;height:5px;background:#888"></div><div class="a" style="left:1505.7px;top:277px;width:1px;height:1px;background:#777"></div><svg style="left:25px;top:273px" width="8" height="9" viewBox="0 0 8 9"><path d="M2.5 0.5 V8.5 M5.5 0.5 V8.5 M0.5 3 H7.5 M0.5 6 H7.5" stroke="#888" stroke-width="0.8"/></svg><svg style="left:220px;top:273px" width="8" height="9" viewBox="0 0 8 9"><path d="M2.5 0.5 V8.5 M5.5 0.5 V8.5 M0.5 3 H7.5 M0.5 6 H7.5" stroke="#888" stroke-width="0.8"/></svg><svg style="left:229px;top:271px" width="10" height="17" viewBox="0 0 10 17"><path d="M0.5 0.5 H9.5 L5 6 Z M0.5 11.5 L5 6 L9.5 11.5 Z" stroke="#888" stroke-width="0.8" fill="#fff"/><rect x="0.5" y="12" width="9" height="4.5" stroke="#888" stroke-width="0.8" fill="#fff"/></svg><svg style="left:1362px;top:277px" width="10" height="7" viewBox="0 0 10 7"><path d="M0.5 6.5 V4 L5 0.5 L9.5 4 V6.5 Z" stroke="#888" stroke-width="0.8" fill="#fff"/></svg><svg style="left:1366px;top:273px" width="8" height="9" viewBox="0 0 8 9"><path d="M2.5 0.5 V8.5 M5.5 0.5 V8.5 M0.5 3 H7.5 M0.5 6 H7.5" stroke="#888" stroke-width="0.8"/></svg><div class="a" style="left:6px;top:933px;width:1516px;height:17px;background:#f3f3f5"></div><div class="t fit" id="F46" style="transform:scaleX(0.9208);left:16px;top:937px;font-size:9.5px;color:#444;">Число слов: 6138</div><svg style="left:101px;top:936px" width="11" height="11" viewBox="0 0 11 11"><rect x="0.5" y="0.5" width="7" height="8" stroke="#555" stroke-width="0.8" fill="none"/><path d="M5 6 L10 10.5 M10 6 L5 10.5" stroke="#555" stroke-width="0.9"/></svg><div class="t fit" id="F47" style="transform:scaleX(0.9826);left:125px;top:937px;font-size:9.5px;color:#444;">русский</div><div class="t fit" id="F48" style="transform:scaleX(0.9345);left:173px;top:937px;font-size:9.5px;color:#444;">Предсказания текста: Вкл</div><svg style="left:295px;top:936px" width="11" height="11" viewBox="0 0 11 11"><circle cx="5.5" cy="1.8" r="1.3" fill="#555"/><path d="M1 3.8 H10 M5.5 3.8 V7 L3 10.5 M5.5 7 L8 10.5" stroke="#555" stroke-width="0.9" fill="none"/></svg><div class="t fit" id="F49" style="transform:scaleX(0.9928);left:310px;top:937px;font-size:9.5px;color:#444;">Специальные возможности: проверьте рекомендации</div><svg style="left:1205px;top:935px" width="13" height="13" viewBox="0 0 13 13"><path d="M0.5 3 V0.5 H3 M10 0.5 H12.5 V3 M12.5 10 V12.5 H10 M3 12.5 H0.5 V10" stroke="#555" stroke-width="0.8" fill="none"/><path d="M3.5 2 H7.5 L9.5 4 V11 H3.5 Z" stroke="#555" stroke-width="0.8" fill="none"/></svg><div class="t fit" id="F50" style="transform:scaleX(0.9694);left:1219px;top:937px;font-size:9.5px;color:#444;">Фокусировка</div><svg style="left:1293px;top:936px" width="11" height="10" viewBox="0 0 11 10"><path d="M0.5 0.5 H10.5 V9.5 H0.5 Z M5.5 0.5 V9.5 M2 3 H4 M2 5 H4 M2 7 H4 M7 3 H9 M7 5 H9 M7 7 H9" stroke="#555" stroke-width="0.8" fill="none"/></svg><svg style="left:1325px;top:935px" width="10" height="12" viewBox="0 0 10 12"><path d="M0.5 0.5 H9.5 V11.5 H0.5 Z M2.5 3 H7.5 M2.5 5 H7.5 M2.5 7 H7.5 M2.5 9 H7.5" stroke="#555" stroke-width="0.8" fill="none"/></svg><div class="a" style="left:1346px;top:933px;width:31px;height:17px;background:#e0e0e2"></div><svg style="left:1355px;top:935px" width="12" height="12" viewBox="0 0 12 12"><path d="M0.5 0.5 H10.5 V10 M0.5 0.5 V11.5 H6 M0.5 3 H10.5 M2.5 5 H5 M2.5 7 H5" stroke="#555" stroke-width="0.8" fill="none"/><circle cx="8.5" cy="9" r="2.6" stroke="#555" stroke-width="0.8" fill="#e0e0e2"/></svg><div class="a" style="left:1382px;top:941px;width:7px;height:1px;background:#888"></div><div class="a" style="left:1392px;top:941px;width:79px;height:1px;background:#888"></div><div class="a" style="left:1433px;top:937px;width:3px;height:9px;background:#666"></div><div class="a" style="left:1430px;top:938px;width:1px;height:7px;background:#666"></div><div class="a" style="left:1477px;top:941px;width:7px;height:1px;background:#888"></div><div class="a" style="left:1480px;top:938px;width:1px;height:7px;background:#888"></div><div class="t fit" id="F51" style="transform:scaleX(0.8910);left:1492px;top:937px;font-size:9.5px;color:#444;">140 %</div><div class="a" style="left:6px;top:288px;width:1516px;height:645px;background:#fff;overflow:hidden"><div class="a" style="left:24px;top:0px;width:1px;height:645px;background:#555"></div><div class="a" style="left:220px;top:0px;width:1px;height:75px;background:#3a3a3a"></div><div class="a" style="left:220px;top:98px;width:1px;height:547px;background:#3a3a3a"></div><div class="a" style="left:1364px;top:0px;width:1px;height:645px;background:#3a3a3a"></div><div class="a" style="left:24px;top:75px;width:1341px;height:1px;background:#3a3a3a"></div><div class="a" style="left:24px;top:98px;width:1341px;height:1px;background:#3a3a3a"></div><div class="a" style="left:24px;top:453px;width:1341px;height:1px;background:#3a3a3a"></div><div class="a" style="left:24px;top:608px;width:1341px;height:1px;background:#3a3a3a"></div><div class="ln" id="L1" style="transform:scaleX(1.0255);word-spacing:0.000px;left:228.70px;top:-10.00px;">Выплаты компенсационного характера, установленные в процентном отношении, применяются к окладу (должностному окладу) без учета</div><div class="ln" id="L2" style="transform:scaleX(1.0226);left:228.70px;top:12.00px;">повышающих коэффициентов.</div><div class="ln" id="L3" style="transform:scaleX(1.0556);left:396.90px;top:78.00px;"><b>Оценка эффективности и выплаты стимулирующего характера.</b></div><div class="ln" id="L4" style="transform:scaleX(0.9759);left:87.00px;top:98.70px;background:#00ff00;padding:1.8px 1px 0 1px">Выплаты</div><div class="ln" id="L5" style="transform:scaleX(1.0128);left:54.00px;top:120.78px;background:#00ff00;padding:1.8px 1px 0 1px">стимулирующего</div><div class="ln" id="L6" style="transform:scaleX(0.9968);left:82.00px;top:142.86px;background:#00ff00;padding:1.8px 1px 0 1px">характера</div><div class="ln" id="L7" style="transform:scaleX(1.0358);left:228.70px;top:100.50px;">Перечень выплат стимулирующего&nbsp; - приказ Минздравсоцразвития РФ от 29.12.2007 N 818&nbsp; "Об утверждении Перечня видов выплат</div><div class="ln" id="L8" style="transform:scaleX(1.0344);left:228.70px;top:122.58px;">стимулирующего характера в федеральных бюджетных, автономных, казенных учреждениях и разъяснения о порядке установления</div><div class="ln" id="L9" style="transform:scaleX(1.0394);left:228.70px;top:144.66px;">выплат стимулирующего характера в этих учреждениях":</div><div class="ln" id="L10" style="transform:scaleX(1.0272);left:228.70px;top:232.98px;">4. Премиальные выплаты по итогам работы.</div><div class="ln" id="L11" style="transform:scaleX(1.0300);word-spacing:2.180px;left:228.70px;top:255.06px;">К выплатам стимулирующего характера относятся выплаты, направленные на стимулирование работника к качественному результату</div><div class="ln" id="L12" style="transform:scaleX(1.0447);left:228.70px;top:277.14px;">труда, а также поощрение за выполненную работу.</div><div class="ln" id="L13" style="transform:scaleX(1.0267);word-spacing:0.000px;left:228.70px;top:299.22px;">Выплаты стимулирующего характера устанавливаются работнику с учетом критериев, позволяющих оценить результативность и качество</div><div class="ln" id="L14" style="transform:scaleX(1.0461);left:228.70px;top:321.30px;">его работы, с учетом <b>рекомендаций соответствующих федеральных органов исполнительной власти.</b></div><div class="ln" id="L15" style="transform:scaleX(1.0335);left:228.70px;top:343.38px;">Размеры и условия осуществления выплат стимулирующего характера конкретизируются в трудовых договорах работников. В</div><div class="ln" id="L16" style="transform:scaleX(1.0536);left:228.70px;top:365.46px;">соответствии с п. <b>5 Постановления № 583 размеры и условия осуществления выплат стимулирующего характера</b></div><div class="ln" id="L17" style="transform:scaleX(1.0514);left:228.70px;top:387.54px;"><b>устанавливаются коллективными договорами, соглашениями, локальными нормативными актами, трудовыми</b></div><div class="ln" id="L18" style="transform:scaleX(1.0476);left:228.70px;top:409.62px;"><b>договорами с учетом разрабатываемых в федеральном учреждении показателей и критериев&nbsp; оценки</b> эффективности</div><div class="ln" id="L19" style="transform:scaleX(1.0439);left:228.70px;top:431.70px;">труда работников этих учреждений.</div><div class="ln" id="L20" style="transform:scaleX(1.0328);left:228.50px;top:164.94px;background:#ffff00;padding:1.8px 1px 0 1px">1. Выплаты за интенсивность и высокие результаты работы.</div><div class="ln" id="L21" style="transform:scaleX(1.0298);left:228.50px;top:187.02px;background:#ffff00;padding:1.8px 1px 0 1px">2. Выплаты за качество выполняемых работ.</div><div class="ln" id="L22" style="transform:scaleX(1.0357);left:228.50px;top:209.10px;background:#00ff00;padding:1.8px 1px 0 1px">3. Выплаты за стаж непрерывной работы, выслугу лет.</div><div class="a" style="left:376px;top:120px;width:156px;height:3px;border-top:1px solid #5b7fc4;border-bottom:1px solid #5b7fc4"></div><div class="a" style="left:1008px;top:429px;width:174px;height:3px;border-top:1px solid #5b7fc4;border-bottom:1px solid #5b7fc4"></div><div class="ln" id="L23" style="transform:scaleX(1.0273);left:92.10px;top:455.00px;">Оценка</div><div class="ln" id="L24" style="transform:scaleX(1.0212);left:41.70px;top:477.08px;">эффективности для</div><div class="ln" id="L25" style="transform:scaleX(1.0311);left:34.70px;top:499.16px;">установления выплат</div><div class="ln" id="L26" style="transform:scaleX(1.0399);left:52.80px;top:521.24px;">стимулирующего</div><div class="ln" id="L27" style="transform:scaleX(1.0353);left:81.00px;top:543.32px;">характера</div><div class="ln" id="L28" style="transform:scaleX(1.0300);word-spacing:7.165px;left:228.70px;top:455.00px;">При установлении выплат стимулирующего характера необходимо учитывать п. 16"Единых рекомендаций по установлению на</div><div class="ln" id="L29" style="transform:scaleX(1.0220);word-spacing:0.000px;left:228.70px;top:477.08px;">федеральном, региональном и местном уровнях систем оплаты труда работников государственных и муниципальных учреждений на 2019</div><div class="ln" id="L30" style="transform:scaleX(1.0510);left:228.70px;top:499.16px;">год", в соответствии с которым:</div><div class="ln" id="L31" style="transform:scaleX(1.0300);word-spacing:2.841px;left:228.70px;top:521.24px;">Размеры и условия установления выплат стимулирующего характера для всех категорий работников учреждений устанавливаются с</div><div class="ln" id="L32" style="transform:scaleX(1.0300);word-spacing:1.071px;left:228.70px;top:543.32px;">учетом соответствующих нормативных правовых актов Российской Федерации соглашениями, коллективными договорами, локальными</div><div class="ln" id="L33" style="transform:scaleX(1.0300);word-spacing:2.400px;left:228.70px;top:565.40px;">нормативными актами, принимаемыми с учетом мнения или по согласованию с представительным органом работников (при наличии</div><div class="ln" id="L34" style="transform:scaleX(1.0349);left:228.70px;top:587.48px;">такого представительного органа) на основе формализованных показателей и критериев эффективности работы.</div><div class="ln" id="L35" style="transform:scaleX(1.0086);left:76.90px;top:611.00px;">Разработка</div><div class="ln" id="L36" style="transform:scaleX(1.0586);left:49.20px;top:633.08px;">критериев оценки</div><div class="ln" id="L37" style="transform:scaleX(1.0386);left:228.70px;top:611.00px;">Вопросы разработки критериев эффективности труда с&nbsp; учетом перехода к "эффективному контракту" в отношении каждого работника</div><div class="ln" id="L38" style="transform:scaleX(1.0619);left:228.70px;top:633.08px;">предусмотрены п. <b>9 Распоряжения Правительства РФ от 04.03.2013 N 293-р «Об утверждении государственной</b></div><svg style="left:539px;top:375px" width="7" height="15" viewBox="0 0 7 15"><path d="M0.5 1 H2.5 C3 1 3.5 1.5 3.5 2 C3.5 1.5 4 1 4.5 1 H6.5 M3.5 2 V13 M0.5 14 H2.5 C3 14 3.5 13.5 3.5 13 C3.5 13.5 4 14 4.5 14 H6.5" stroke="#222" stroke-width="0.9" fill="none"/></svg></div><div class="a" style="left:1526px;top:528px;width:1px;height:24px;background:#cfcfcf"></div><div class="a" style="left:1529px;top:528px;width:1px;height:24px;background:#cfcfcf"></div><svg style="left:1534px;top:433px" width="380" height="214" viewBox="0 0 380 214"><defs><filter id="bl" x="-30%" y="-30%" width="160%" height="160%"><feGaussianBlur stdDeviation="8"/></filter><filter id="bl2" x="-10%" y="-10%" width="120%" height="120%"><feGaussianBlur stdDeviation="1.6"/></filter><filter id="bl3" x="-20%" y="-20%" width="140%" height="140%"><feGaussianBlur stdDeviation="4"/></filter><linearGradient id="bgg" x1="0" y1="0" x2="0" y2="1"><stop offset="0" stop-color="#e4ddca"/><stop offset="0.6" stop-color="#ddd0bb"/><stop offset="1" stop-color="#c9b39c"/></linearGradient><linearGradient id="jk" x1="0" y1="0" x2="1" y2="1"><stop offset="0" stop-color="#1f2d55"/><stop offset="1" stop-color="#0c1330"/></linearGradient><radialGradient id="fc" cx="0.45" cy="0.4" r="0.7"><stop offset="0" stop-color="#f2cbd2"/><stop offset="0.7" stop-color="#e4b0b2"/><stop offset="1" stop-color="#c98a86"/></radialGradient><clipPath id="vc"><rect width="380" height="214"/></clipPath></defs><g clip-path="url(#vc)"><rect width="380" height="214" fill="url(#bgg)"/><g filter="url(#bl)"><rect x="-20" y="45" width="95" height="190" fill="#8a4632"/><rect x="10" y="80" width="45" height="115" fill="#a0644c"/><rect x="98" y="112" width="58" height="62" fill="#3a2a22"/><rect x="238" y="0" width="80" height="60" fill="#c8a594"/><rect x="232" y="50" width="88" height="140" fill="#a06a55"/><rect x="318" y="-10" width="28" height="230" fill="#d9bdaf"/><rect x="346" y="-10" width="45" height="230" fill="#eceee8"/><rect x="150" y="165" width="30" height="50" fill="#6b4a3a"/><rect x="360" y="180" width="30" height="40" fill="#3a2a25"/></g><g filter="url(#bl2)"><path d="M52 214 C56 188 68 176 95 168 L150 146 L175 175 L235 170 L238 143 L292 160 C318 170 324 192 330 214 Z" fill="url(#jk)"/><path d="M150 150 L182 214 L252 214 L240 148 L205 176 Z" fill="#10121c"/><path d="M158 128 L162 160 C175 176 220 178 236 152 L234 125 Z" fill="#d9a29a"/><ellipse cx="139" cy="113" rx="8" ry="17" fill="#d99a9a"/><path d="M146 58 C150 40 175 32 200 33 C226 34 238 48 238 72 L236 128 C233 152 222 172 200 175 C175 175 158 160 152 135 Z" fill="url(#fc)"/><path d="M131 95 C128 60 130 35 148 16 C162 4 182 1 200 3 C222 5 234 16 237 32 C240 48 239 66 236 84 L231 84 C229 70 226 62 219 55 C210 47 200 38 188 37 C175 37 163 42 150 52 C145 62 143 80 142 95 Z" fill="#43302a"/><path d="M146 91 L191 86 L193 110 L160 115 Z M200 85 L243 79 L242 104 L203 108 Z" stroke="#4a3838" stroke-width="1.3" fill="none"/><path d="M157 94 L191 90 M202 88 L240 84" stroke="#6cc4d4" stroke-width="5" opacity="0.7"/><ellipse cx="185" cy="60" rx="28" ry="16" fill="#f2d0dc" opacity="0.35"/><path d="M158 83 C167 79 178 79 188 82 M204 79 C214 75 225 75 234 78" stroke="#5a3a32" stroke-width="3" fill="none"/><path d="M190 118 C196 122 202 122 208 118" stroke="#c28a86" stroke-width="2" fill="none"/><path d="M181 140 C192 135 205 134 217 138 C210 149 191 150 181 140 Z" fill="#a85a62"/><path d="M186 140 C195 138 204 138 212 139" stroke="#f0e0e0" stroke-width="1.5" fill="none"/></g></g></svg><div class="a" style="left:1534px;top:627px;width:136px;height:20px;background:rgba(40,38,40,0.78)"></div><svg style="left:1537px;top:631px" width="15" height="13" viewBox="0 0 15 13"><rect x="0.5" y="8" width="2.5" height="5" fill="#fff"/><rect x="4.5" y="5.5" width="2.5" height="7.5" fill="#fff"/><rect x="8.5" y="3" width="2.5" height="10" fill="#fff"/><rect x="12.5" y="0" width="2.5" height="13" fill="#fff"/></svg><div class="t" style="left:1556px;top:631px;font-size:12.5px;color:#fff">Vsevolod Chikunov</div><div class="a" style="left:19px;top:976px;width:38px;height:38px;background:#1c1c1c;border:1px solid #2c2c2c;border-radius:50%"></div><svg style="left:31px;top:988px" width="14" height="14" viewBox="0 0 14 14"><path d="M1.5 12.5 L2.2 9.2 L9.5 1.8 L12.2 4.5 L4.8 11.8 Z M8 3.3 L10.7 6" stroke="#24c45a" stroke-width="1.3" fill="none"/></svg><svg style="left:38px;top:1032px" width="26" height="26" viewBox="0 0 26 26"><rect x="9" y="2" width="8" height="13" rx="4" fill="#a9a9a9"/><path d="M6 11 C6 16 9 18.5 13 18.5 C17 18.5 20 16 20 11 M13 18.5 V22 M9 22.5 H17" stroke="#a9a9a9" stroke-width="1.6" fill="none"/><path d="M2 24 L24 2" stroke="#e0424a" stroke-width="1.8"/></svg><svg style="left:85px;top:1041px" width="9" height="6" viewBox="0 0 9 6"><path d="M1 5 L4.5 1.5 L8 5" stroke="#cfcfcf" stroke-width="1.4" fill="none"/></svg><div class="t" style="left:-49px;top:1061px;width:200px;text-align:center;font-size:12.5px;color:#e6e6e6">Включить звук</div><svg style="left:136px;top:1032px" width="29" height="24" viewBox="0 0 29 24"><rect x="1" y="5" width="18" height="14" rx="2.5" fill="#a9a9a9"/><path d="M20 10 L27 6 V18 L20 14 Z" fill="#a9a9a9"/><path d="M2 23 L24 1" stroke="#e0424a" stroke-width="1.8"/></svg><div class="t" style="left:50px;top:1061px;width:200px;text-align:center;font-size:12.5px;color:#e6e6e6">Начать видео</div><svg style="left:500px;top:1035px" width="27" height="19" viewBox="0 0 27 19"><circle cx="8" cy="5" r="4.3" fill="#b0b0b0"/><path d="M0 18 C0 12 3 10.5 8 10.5 C13 10.5 16 12 16 18 Z" fill="#b0b0b0"/><circle cx="19" cy="5.5" r="3.8" fill="#b0b0b0"/><path d="M15 11.2 C17 10.8 18 10.8 19 10.8 C24 10.8 26.5 12.5 26.5 18 H17.5 C17.5 14.5 16.5 12.5 15 11.2 Z" fill="#b0b0b0"/></svg><div class="t" style="left:529px;top:1036px;font-size:12.5px;color:#e6e6e6">98</div><svg style="left:563px;top:1041px" width="9" height="6" viewBox="0 0 9 6"><path d="M1 5 L4.5 1.5 L8 5" stroke="#cfcfcf" stroke-width="1.4" fill="none"/></svg><div class="t" style="left:414px;top:1061px;width:200px;text-align:center;font-size:12.5px;color:#e6e6e6">Участники</div><svg style="left:612px;top:1034px" width="22" height="21" viewBox="0 0 22 21"><path d="M2 1 H20 C21 1 21.5 1.5 21.5 2.5 V13 C21.5 14 21 14.5 20 14.5 H9 L3.5 19.5 V14.5 H2 C1 14.5 0.5 14 0.5 13 V2.5 C0.5 1.5 1 1 2 1 Z" fill="#b0b0b0"/></svg><div class="a" style="left:627px;top:1030px;width:20px;height:13px;background:#e02e3c;border-radius:7px"></div><div class="t" style="left:627px;top:1031px;width:20px;text-align:center;font-size:10.5px;color:#fff;font-weight:bold">12</div><svg style="left:652px;top:1041px" width="9" height="6" viewBox="0 0 9 6"><path d="M1 5 L4.5 1.5 L8 5" stroke="#cfcfcf" stroke-width="1.4" fill="none"/></svg><div class="t" style="left:523px;top:1061px;width:200px;text-align:center;font-size:12.5px;color:#e6e6e6">Чат</div><div class="a" style="left:724px;top:1034px;width:28px;height:20px;background:#23d660;border-radius:3px"></div><svg style="left:731px;top:1037px" width="14" height="14" viewBox="0 0 14 14"><path d="M7 12 V2.5 M3 6.5 L7 2.5 L11 6.5" stroke="#111" stroke-width="2" fill="none"/></svg><div class="t" style="left:638px;top:1061px;width:200px;text-align:center;font-size:12.5px;color:#23d660">Демонстрация экрана</div><svg style="left:837px;top:1032px" width="21" height="24" viewBox="0 0 21 24"><path d="M3 0.5 H13 L20.5 8 V21 C20.5 22.5 19.5 23.5 18 23.5 H3 C1.5 23.5 0.5 22.5 0.5 21 V3 C0.5 1.5 1.5 0.5 3 0.5 Z" fill="#9a9a9a"/><path d="M13 0.5 V8 H20.5" fill="#cfcfcf"/><path d="M9 9.5 L10.2 13 L13.5 14 L10.2 15 L9 18.5 L7.8 15 L4.5 14 L7.8 13 Z" fill="#1a1a1a"/></svg><div class="t" style="left:747px;top:1061px;width:200px;text-align:center;font-size:12.5px;color:#e6e6e6">Сводка</div><svg style="left:921px;top:1030px" width="26" height="26" viewBox="0 0 26 26"><path d="M11 5 L13.5 14 L22 16.5 L13.5 19 L11 26 L8.5 19 L0 16.5 L8.5 14 Z" fill="#a8a8a8"/><path d="M20 1 L21 4 L24 5 L21 6 L20 9 L19 6 L16 5 L19 4 Z" fill="#a8a8a8"/></svg><div class="t" style="left:834px;top:1061px;width:200px;text-align:center;font-size:12.5px;color:#e6e6e6">AI Companion</div><svg style="left:1009px;top:1033px" width="22" height="22" viewBox="0 0 22 22"><circle cx="11" cy="11" r="9.8" stroke="#a8a8a8" stroke-width="1.6" fill="none"/><circle cx="11" cy="11" r="7.5" fill="#a8a8a8"/></svg><div class="t" style="left:920px;top:1061px;width:200px;text-align:center;font-size:12.5px;color:#e6e6e6">Запись</div><div class="a" style="left:1109px;top:1035px;width:24px;height:18px;background:#a8a8a8;border-radius:3px"></div><div class="t" style="left:1109px;top:1039px;width:24px;text-align:center;font-size:10px;color:#1a1a1a;font-weight:bold">CC</div><svg style="left:1167px;top:1041px" width="9" height="6" viewBox="0 0 9 6"><path d="M1 5 L4.5 1.5 L8 5" stroke="#cfcfcf" stroke-width="1.4" fill="none"/></svg><div class="t" style="left:1021px;top:1061px;width:200px;text-align:center;font-size:12.5px;color:#e6e6e6">Показать субтитры</div><svg style="left:1211px;top:1031px" width="26" height="25" viewBox="0 0 26 25"><circle cx="11" cy="13.5" r="10" fill="#a8a8a8"/><circle cx="7.8" cy="11.5" r="1.4" fill="#1a1a1a"/><circle cx="14.2" cy="11.5" r="1.4" fill="#1a1a1a"/><path d="M6.5 15.5 C8 19 14 19 15.5 15.5 Z" fill="#1a1a1a"/><path d="M21 0.5 V7 M17.8 3.8 H24.2" stroke="#a8a8a8" stroke-width="1.5"/></svg><div class="t" style="left:1123px;top:1061px;width:200px;text-align:center;font-size:12.5px;color:#e6e6e6">Реакции</div><svg style="left:1297px;top:1034px" width="20" height="20" viewBox="0 0 20 20"><circle cx="15" cy="4.5" r="2.5" stroke="#a8a8a8" stroke-width="1.5" fill="none"/><circle cx="4.5" cy="15" r="2.5" stroke="#a8a8a8" stroke-width="1.5" fill="none"/><path d="M1.5 10 V4 C1.5 2.5 2.5 1.5 4 1.5 H9.5 M18.5 9.5 V15.5 C18.5 17 17.5 18.5 16 18.5 H10" stroke="#a8a8a8" stroke-width="1.5" fill="none"/></svg><div class="t" style="left:1207px;top:1061px;width:200px;text-align:center;font-size:12.5px;color:#e6e6e6">Приложения</div><svg style="left:1400px;top:1033px" width="22" height="20" viewBox="0 0 22 20"><path d="M8 16 H3 C1.8 16 1 15.2 1 14 V3 C1 1.8 1.8 1 3 1 H19 C20.2 1 21 1.8 21 3 V12" stroke="#a8a8a8" stroke-width="1.6" fill="none"/><rect x="10" y="14" width="11" height="4.5" rx="2" fill="#a8a8a8"/></svg><div class="t" style="left:1310px;top:1061px;width:200px;text-align:center;font-size:12.5px;color:#e6e6e6">Доски сообщений</div><svg style="left:1509px;top:1033px" width="19" height="21" viewBox="0 0 19 21"><path d="M3 1 H14 C15 1 15.5 1.5 15.5 2.5 V13 M3 1 V17 C3 18 3.5 18.5 4.5 18.5 H8" stroke="#a8a8a8" stroke-width="1.5" fill="none"/><path d="M6 5 H12.5 M6 8 H12.5 M6 11 H10" stroke="#a8a8a8" stroke-width="1.3"/><path d="M1 4 H4 M1 8 H4 M1 12 H4" stroke="#a8a8a8" stroke-width="1.2"/><rect x="9" y="15" width="10" height="4.5" rx="2" fill="#a8a8a8"/></svg><div class="t" style="left:1418px;top:1061px;width:200px;text-align:center;font-size:12.5px;color:#e6e6e6">Примечания</div><div class="a" style="left:1846px;top:1040px;width:62px;height:26px;background:#c42127;border-radius:5px"></div><div class="t" style="left:1846px;top:1047px;width:62px;text-align:center;font-size:12.5px;color:#fff;font-weight:bold">Выйти</div></body></html>
